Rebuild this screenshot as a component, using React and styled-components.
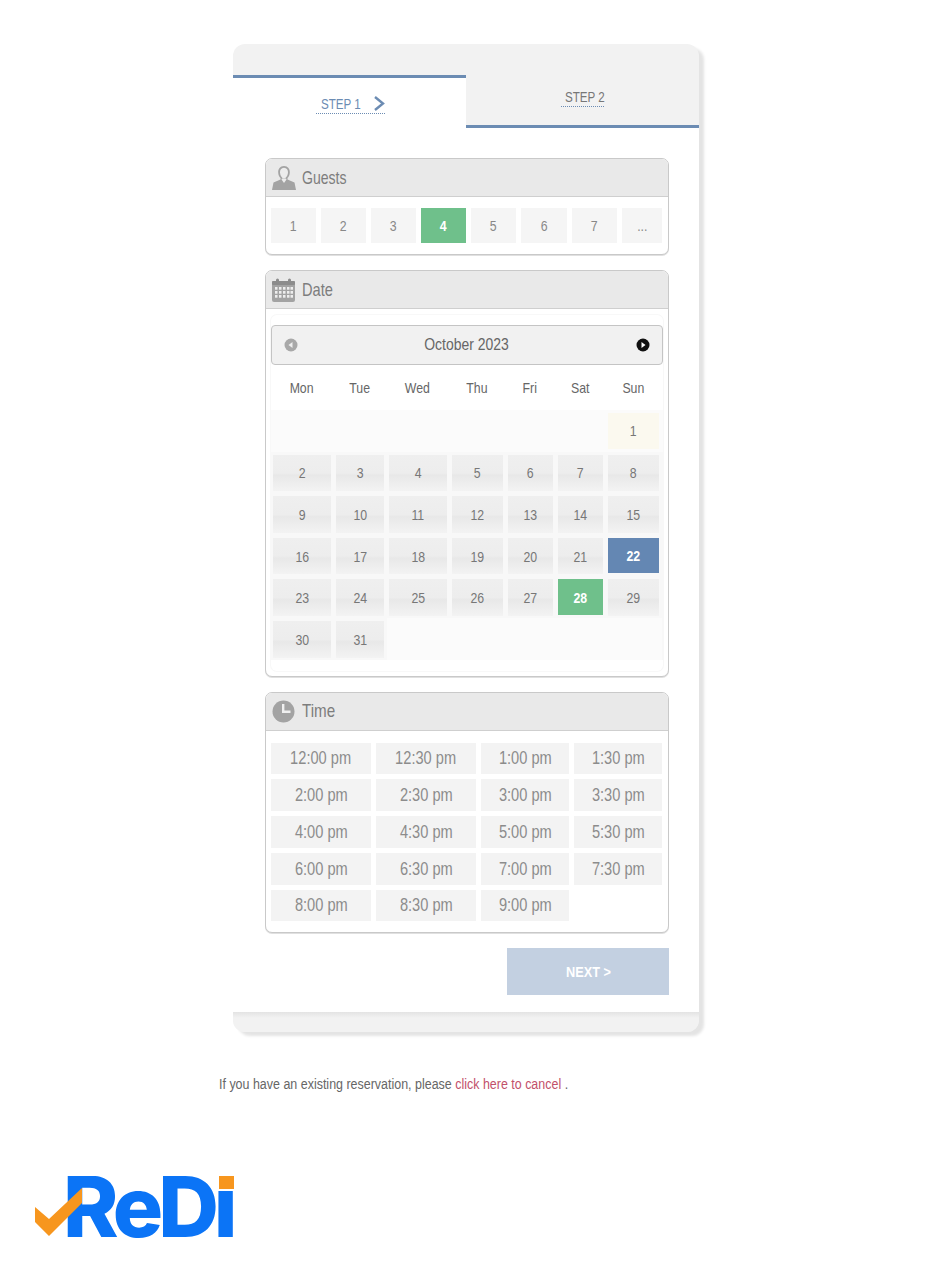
import React from 'react';
import styled, { createGlobalStyle } from 'styled-components';

const Global = createGlobalStyle`
  html, body { margin: 0; padding: 0; background: #fff; }
  body { font-family: "Liberation Sans", Arial, sans-serif; color: #666; }
`;
const Page = styled.div`
  width: 931px;
  height: 1274px;
  padding-top: 44px;
  box-sizing: border-box;
  overflow: hidden;
`;
/* The source face is a narrow one; no narrow family is installed, so text is squeezed horizontally. */
const Squeeze = styled.span`
  display: inline-block;
  white-space: nowrap;
  transform: scaleX(${p => p.$x});
  transform-origin: ${p => p.$origin || 'center'};
`;
const Card = styled.div`
  width: 466px;
  margin-left: 233px;
  padding-top: 31px;
  background: #f2f2f2;
  border-radius: 12px;
  box-shadow: 5px 4px 3px #e4e4e4;
`;
const Tabs = styled.div`
  display: flex;
  height: 53px;
`;
const Tab = styled.div`
  flex: 1;
  box-sizing: border-box;
  display: flex;
  justify-content: center;
  background: ${p => (p.$active ? '#fff' : 'transparent')};
  border-top: ${p => (p.$active ? '3px solid #6c8cb3' : '0')};
  border-bottom: ${p => (p.$active ? '0' : '3px solid #6c8cb3')};
  padding-top: ${p => (p.$active ? '16px' : '13px')};
`;
const TabLabel = styled.span`
  box-sizing: border-box;
  display: flex;
  align-items: center;
  justify-content: space-between;
  width: ${p => (p.$active ? '69px' : '43px')};
  height: ${p => (p.$active ? '20px' : '19px')};
  margin-left: ${p => (p.$active ? '2px' : '0')};
  padding-left: ${p => (p.$active ? '5px' : '4px')};
  font-size: 14px;
  color: ${p => (p.$active ? '#6c8cb3' : '#777')};
  border-bottom: 1px dotted #6c8cb3;
`;
const Body = styled.div`
  background: #fff;
  padding: 30px 30px 17px 32px;
  display: flex;
  flex-direction: column;
  gap: 15px;
`;
const Panel = styled.section`
  border: 1px solid #c9c9c9;
  border-radius: 7px;
  box-shadow: 0 1px 0 #e0e0e0;
  overflow: hidden;
  background: #fff;
`;
const PanelHead = styled.div`
  box-sizing: border-box;
  display: flex;
  align-items: center;
  gap: 6px;
  height: 38px;
  padding-left: 6px;
  background: #e9e9e9;
  border-bottom: 1px solid #cfcfcf;
  font-size: 19px;
  color: #7d7d7d;
`;
const GuestRow = styled.div`
  display: grid;
  grid-template-columns: repeat(5, 45px) 46px 45px 40px;
  column-gap: 5px;
  padding: 11px 5px 11px;
`;
const GuestBtn = styled.div`
  height: 35px;
  display: flex;
  align-items: center;
  justify-content: center;
  font-size: 15px;
  background: ${p => (p.$on ? '#6fc08b' : '#f5f5f5')};
  color: ${p => (p.$on ? '#fff' : '#888')};
  font-weight: ${p => (p.$on ? 700 : 400)};
`;
const Calendar = styled.div`
  margin: 6px 5px 5px;
  border-radius: 6px;
  background: #fff;
  box-shadow: 0 0 0 1px #f8f8f8;
  padding: 10px 0 11px;
`;
const CalHead = styled.div`
  display: flex;
  align-items: center;
  justify-content: space-between;
  height: 38px;
  padding: 0 12px;
  background: #f1f1f1;
  border: 1px solid #c4c4c4;
  border-radius: 4px;
  font-size: 17px;
  color: #666;
`;
const NavDot = styled.svg`
  width: 14px;
  height: 14px;
  display: block;
`;
const Week = styled.div`
  display: grid;
  grid-template-columns: 63px 53px 63px 56px 50px 50px 56px;
  height: 41.6px;
  background: ${p => p.$bg || '#f8f8f8'};
`;
const WeekHead = styled(Week)`
  height: 45px;
  background: #fff;
`;
const Dow = styled.div`
  display: flex;
  align-items: center;
  justify-content: center;
  margin-right: 2px;
  font-size: 15px;
  color: #666;
`;
const dayBg = {
  plain: 'linear-gradient(#efefef 0%, #ededed 50%, #e8e8e8 56%, #f3f3f3 100%)',
  today: '#fbf9ef',
  picked: '#6487b3',
  chosen: '#6fc08b',
};
const Track = styled.div`
  display: flex;
  padding: ${p => (p.$flat ? '3px 3px 3px 2px' : '3px 3px 2px 2px')};
  background: ${p => (p.$blank ? '#fbfbfb' : 'transparent')};
`;
const Day = styled.div`
  flex: 1;
  display: flex;
  align-items: center;
  justify-content: center;
  font-size: 15px;
  background: ${p => dayBg[p.$kind]};
  color: ${p => (p.$kind === 'picked' || p.$kind === 'chosen' ? '#fff' : '#777')};
  font-weight: ${p => (p.$kind === 'picked' || p.$kind === 'chosen' ? 700 : 400)};
`;
const TimeGrid = styled.div`
  display: grid;
  grid-template-columns: 100px 100px 88px 88px;
  gap: 5px;
  padding: 12px 5px 11px;
`;
const Slot = styled.div`
  height: 31.75px;
  display: flex;
  align-items: center;
  justify-content: center;
  background: #f3f3f3;
  font-size: 19px;
  color: #8c8c8c;
`;
const ButtonRow = styled.div`
  display: flex;
  justify-content: flex-end;
`;
const NextBtn = styled.button`
  width: 162px;
  height: 47px;
  border: 0;
  padding: 0;
  background: #c3d0e1;
  color: #fff;
  font: 700 15px "Liberation Sans", Arial, sans-serif;
`;
const CardFoot = styled.div`
  height: 20px;
  border-radius: 0 0 12px 12px;
  background: linear-gradient(#e3e3e3 0, #f2f2f2 6px);
`;
const Note = styled.p`
  margin: 44px 0 0 219px;
  font-size: 14px;
  line-height: 16px;
  color: #666;
`;
const CancelLink = styled.a`
  color: #c2506a;
`;
const Logo = styled.div`
  position: relative;
  margin: 84px 0 0 67px;
  width: 167px;
  height: 61px;
`;
const LogoWord = styled.span`
  display: block;
  margin-left: -4px;
  font: 800 84px/61px Inter, "Liberation Sans", sans-serif;
  letter-spacing: -5px;
  color: #0b74f6;
  white-space: nowrap;
`;
const LogoDot = styled.i`
  position: absolute;
  right: 0;
  top: 0;
  width: 15px;
  height: 13px;
  background: #f7961e;
`;
const LogoCheck = styled.svg`
  position: absolute;
  left: -32px;
  top: 12px;
  width: 47px;
  height: 48px;
`;

const gray = '#a3a3a3';
const PersonIcon = () => (
  <svg width="24" height="24" viewBox="0 0 24 24">
    <path fill={gray} d="M12 0C8 0 6 3 6.200 6.500c.1 2.400 1 4.300 2.300 5.600v1.300L1.500 16.500 0 24h24l-1.500-7.500-7-3.100v-1.300c1.300-1.300 2.200-3.200 2.300-5.600C18 3 16 0 12 0z" />
    <path fill="#ececec" d="M12 1.800c-2.800 0-4.200 2.200-4 4.800.2 2.900 1.900 5.900 4 5.900s3.800-3 4-5.900c.2-2.600-1.200-4.800-4-4.800z" />
    <path fill="#ececec" d="M9.500 13.500L12 17l2.500-3.500-.5-1h-4z" />
  </svg>
);
const CalendarIcon = () => (
  <svg width="24" height="24" viewBox="0 0 24 24">
    <rect x="0" y="3" width="23" height="21" rx="2" fill={gray} />
    <rect x="0" y="3" width="23" height="4" rx="1" fill="#8c8c8c" />
    <rect x="4" y="0.500" width="3" height="5" rx="1.500" fill="#8c8c8c" />
    <rect x="16" y="0.500" width="3" height="5" rx="1.500" fill="#8c8c8c" />
    {[9, 13, 17].map(y => [3, 7, 11, 15, 18.500].map(x => <rect key={`${x}-${y}`} x={x} y={y} width="2.500" height="2.700" fill="#eee" />))}
  </svg>
);
const ClockIcon = () => (
  <svg width="24" height="23" viewBox="0 0 24 23">
    <circle cx="11.500" cy="11.500" r="11" fill={gray} />
    <path d="M10 4h2.400v6.600h6.100v2.400H10z" fill="#f0f0f0" />
  </svg>
);
const Chevron = () => (
  <svg width="12" height="15" viewBox="0 0 12 15" fill="none">
    <path d="M2 1l8 6.500L2 14" stroke="#6c8cb3" strokeWidth="2.400" />
  </svg>
);

const weeks = [
  [null, null, null, null, null, null, 1],
  [2, 3, 4, 5, 6, 7, 8],
  [9, 10, 11, 12, 13, 14, 15],
  [16, 17, 18, 19, 20, 21, 22],
  [23, 24, 25, 26, 27, 28, 29],
  [30, 31, null, null, null, null, null],
];
const kindOf = d => (d === 1 ? 'today' : d === 22 ? 'picked' : d === 28 ? 'chosen' : 'plain');
const times = ['12:00 pm', '12:30 pm', '1:00 pm', '1:30 pm', '2:00 pm', '2:30 pm', '3:00 pm', '3:30 pm', '4:00 pm', '4:30 pm', '5:00 pm', '5:30 pm', '6:00 pm', '6:30 pm', '7:00 pm', '7:30 pm', '8:00 pm', '8:30 pm', '9:00 pm'];

export default function App() {
  return (
    <Page>
      <Global />
      <Card>
        <Tabs>
          <Tab $active>
            <TabLabel $active>
              <Squeeze $x={0.83} $origin="left">STEP 1</Squeeze>
              <Chevron />
            </TabLabel>
          </Tab>
          <Tab>
            <TabLabel><Squeeze $x={0.83} $origin="left">STEP 2</Squeeze></TabLabel>
          </Tab>
        </Tabs>
        <Body>
          <Panel>
            <PanelHead><PersonIcon /><Squeeze $x={0.74} $origin="left">Guests</Squeeze></PanelHead>
            <GuestRow>
              {['1', '2', '3', '4', '5', '6', '7', '...'].map(g => (
                <GuestBtn key={g} $on={g === '4'}><Squeeze $x={0.82}>{g}</Squeeze></GuestBtn>
              ))}
            </GuestRow>
          </Panel>
          <Panel>
            <PanelHead><CalendarIcon /><Squeeze $x={0.77} $origin="left">Date</Squeeze></PanelHead>
            <Calendar>
              <CalHead>
                <NavDot viewBox="0 0 14 14"><circle cx="7" cy="7" r="6.500" fill="#a8a8a8" /><path d="M8.500 4v6L4.500 7z" fill="#eee" /></NavDot>
                <Squeeze $x={0.82}>October 2023</Squeeze>
                <NavDot viewBox="0 0 14 14"><circle cx="7" cy="7" r="6.500" fill="#111" /><path d="M5.500 4v6l4-3z" fill="#fff" /></NavDot>
              </CalHead>
              <WeekHead>
                {['Mon', 'Tue', 'Wed', 'Thu', 'Fri', 'Sat', 'Sun'].map(d => <Dow key={d}><Squeeze $x={0.82}>{d}</Squeeze></Dow>)}
              </WeekHead>
              {weeks.map((w, i) => (
                <Week key={i} $bg={i === 0 ? '#fbfbfb' : undefined}>
                  {w.map((d, j) => (
                    <Track key={j} $blank={!d} $flat={d === 1 || d === 22 || d === 28}>
                      {d && <Day $kind={kindOf(d)}><Squeeze $x={0.82}>{d}</Squeeze></Day>}
                    </Track>
                  ))}
                </Week>
              ))}
            </Calendar>
          </Panel>
          <Panel>
            <PanelHead><ClockIcon /><Squeeze $x={0.8} $origin="left">Time</Squeeze></PanelHead>
            <TimeGrid>{times.map(t => <Slot key={t}><Squeeze $x={0.77}>{t}</Squeeze></Slot>)}</TimeGrid>
          </Panel>
          <ButtonRow><NextBtn><Squeeze $x={0.85}>NEXT &gt;</Squeeze></NextBtn></ButtonRow>
        </Body>
        <CardFoot />
      </Card>
      <Note>
        <Squeeze $x={0.89} $origin="left">
          If you have an existing reservation, please <CancelLink>click here to cancel</CancelLink> .
        </Squeeze>
      </Note>
      <Logo>
        <LogoWord>ReDı</LogoWord>
        <LogoDot />
        <LogoCheck viewBox="0 0 47 48"><path fill="#f7961e" d="M0 19l14 12L47 0v15L14 48 0 34z" /></LogoCheck>
      </Logo>
    </Page>
  );
}
